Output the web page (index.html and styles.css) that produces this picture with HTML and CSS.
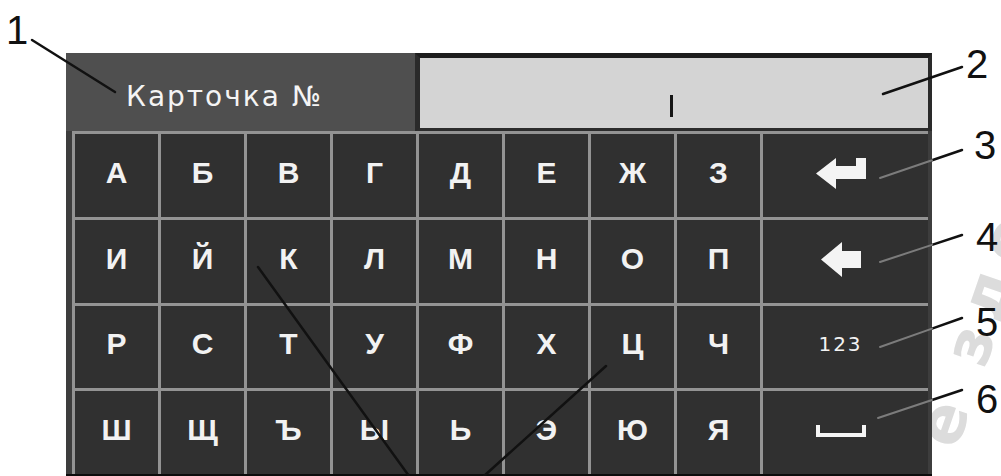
FILE: index.html
```html
<!DOCTYPE html>
<html lang="ru">
<head>
<meta charset="utf-8">
<title>Экранная клавиатура</title>
<link rel="stylesheet" href="styles.css">
</head>
<body>
<div class="sheet">
  <span class="watermark">е здо</span>

  <div class="terminal">
    <div class="header">
      <div class="caption">Карточка №</div>
      <div class="field"><span class="caret"></span></div>
    </div>
    <div class="keys">
      <div class="key">А</div>
      <div class="key">Б</div>
      <div class="key">В</div>
      <div class="key">Г</div>
      <div class="key">Д</div>
      <div class="key">Е</div>
      <div class="key">Ж</div>
      <div class="key">З</div>
      <div class="key wide">
        <svg class="glyph" width="50" height="31" viewBox="0 0 50 31"><path d="M0 15.5 L20 0 V8 H40 V0 H50 V21 H20 V31 Z"/></svg>
      </div>

      <div class="key">И</div>
      <div class="key">Й</div>
      <div class="key">К</div>
      <div class="key">Л</div>
      <div class="key">М</div>
      <div class="key">Н</div>
      <div class="key">О</div>
      <div class="key">П</div>
      <div class="key wide">
        <svg class="glyph" width="40" height="35" viewBox="0 0 40 35"><path d="M0 17.5 L21 0 V9 H40 V26 H21 V35 Z"/></svg>
      </div>

      <div class="key">Р</div>
      <div class="key">С</div>
      <div class="key">Т</div>
      <div class="key">У</div>
      <div class="key">Ф</div>
      <div class="key">Х</div>
      <div class="key">Ц</div>
      <div class="key">Ч</div>
      <div class="key wide digits">123</div>

      <div class="key">Ш</div>
      <div class="key">Щ</div>
      <div class="key">Ъ</div>
      <div class="key">Ы</div>
      <div class="key">Ь</div>
      <div class="key">Э</div>
      <div class="key">Ю</div>
      <div class="key">Я</div>
      <div class="key wide">
        <svg class="glyph" width="50" height="12" viewBox="0 0 50 12"><path d="M0 0 H4 V8 H46 V0 H50 V12 H0 Z"/></svg>
      </div>
    </div>
  </div>

  <!-- leader lines for the numbered callouts -->
  <svg class="callouts" width="1001" height="476" viewBox="0 0 1001 476">
    <g class="ink">
      <line x1="32" y1="40" x2="115" y2="92"/>
      <line x1="962" y1="67" x2="883" y2="94"/>
      <line x1="962" y1="150" x2="932" y2="160.2"/>
      <line x1="962" y1="235" x2="932" y2="244.9"/>
      <line x1="962" y1="318" x2="932" y2="328.6"/>
      <line x1="962" y1="390" x2="932" y2="400"/>
      <line x1="258" y1="267" x2="409" y2="476"/>
      <line x1="606" y1="366" x2="484" y2="476"/>
    </g>
    <g class="ghost">
      <line x1="932" y1="160.2" x2="880" y2="178"/>
      <line x1="932" y1="244.9" x2="880" y2="262"/>
      <line x1="932" y1="328.6" x2="880" y2="347"/>
      <line x1="932" y1="400" x2="878" y2="418"/>
    </g>
  </svg>
  <span class="num n1">1</span>
  <span class="num n2">2</span>
  <span class="num n3">3</span>
  <span class="num n4">4</span>
  <span class="num n5">5</span>
  <span class="num n6">6</span>
</div>
</body>
</html>
```

FILE: styles.css
```css
html, body {
  margin: 0;
  background: #ffffff;
}

.sheet {
  position: relative;
  width: 1001px;
  height: 476px;
  overflow: hidden;
  box-sizing: border-box;
  padding-top: 53px;
  font-family: "Liberation Sans", Arial, sans-serif;
}

/* faint diagonal stamp along the right margin */
.watermark {
  position: absolute;
  left: 966px;
  top: 390px;
  transform-origin: 0 100%;
  transform: rotate(-71deg);
  font-family: "DejaVu Sans", sans-serif;
  font-weight: bold;
  font-size: 64px;
  line-height: 64px;
  letter-spacing: 10px;
  white-space: nowrap;
  color: #dcdcdc;
}

/* terminal screen */
.terminal {
  position: relative;
  margin-left: 66px;
  width: 866px;
  background: #3d3d3d;
  border-bottom: 4px solid #0c0c0c;
}

.header {
  display: flex;
  height: 78px;
}

.caption {
  width: 349px;
  box-sizing: border-box;
  padding: 8px 0 0 60px;
  display: flex;
  align-items: center;
  background: #4f4f4f;
  color: #f4f4f4;
  font-family: "DejaVu Sans", sans-serif;
  font-size: 28px;
  letter-spacing: 2px;
}

.field {
  flex: 1;
  box-sizing: border-box;
  display: flex;
  align-items: center;
  justify-content: center;
  padding-top: 26px;
  background: #d4d4d4;
  border-top: 5px solid #1d1d1d;
  border-left: 5px solid #2a2a2a;
  border-right: 4px solid #2a2a2a;
  border-bottom: 3px solid #2c2c2c;
}

.caret {
  width: 3px;
  height: 22px;
  margin-left: -6px;
  background: #151515;
}

/* key grid */
.keys {
  display: grid;
  grid-template-columns: repeat(8, 86px) 1fr;
  grid-template-rows: 86px 86px 85px 86px;
  padding: 0 4px 0 6px;
}

.key {
  box-sizing: border-box;
  display: flex;
  align-items: center;
  justify-content: center;
  padding-bottom: 6px;
  background: #303030;
  border-left: 3px solid #939393;
  border-top: 3px solid #939393;
  color: #f2f2f2;
  font-size: 30px;
  font-weight: bold;
}

.key.wide {
  padding: 0 10px 4px 0;
}

.key.digits {
  font-family: "DejaVu Sans", sans-serif;
  font-size: 20px;
  font-weight: normal;
  letter-spacing: 2px;
  padding-bottom: 6px;
}

.glyph {
  display: block;
  fill: #f4f4f4;
}

/* callouts */
.callouts {
  position: absolute;
  left: 0;
  top: 0;
}

.callouts line {
  stroke-width: 2.5;
  stroke-linecap: round;
}

.ink line {
  stroke: #111111;
}

.ghost line {
  stroke: #7c7c7c;
  stroke-width: 2;
}

.num {
  position: absolute;
  font-size: 40px;
  line-height: 40px;
  color: #111111;
}

.n1 { left: 6px; top: 10px; }
.n2 { left: 966px; top: 44px; }
.n3 { left: 974px; top: 125px; }
.n4 { left: 976px; top: 217px; }
.n5 { left: 976px; top: 302px; }
.n6 { left: 976px; top: 379px; }
```
